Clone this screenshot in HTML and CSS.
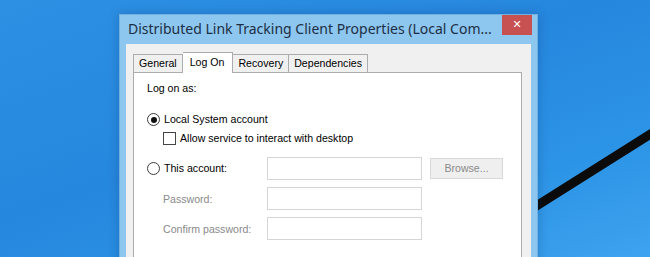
FILE: index.html
```html
<!DOCTYPE html>
<html lang="en">
<head>
  <meta charset="UTF-8" />
  <title>Distributed Link Tracking Client Properties</title>
  <link rel="stylesheet" href="styles.css">
</head>
<body>
  <div class="desktop">
    <svg class="wallpaper" width="650" height="257" viewBox="0 0 650 257">
      <line x1="300" y1="355" x2="660" y2="128" stroke="#0b0b0b" stroke-width="9" stroke-linecap="round" />
    </svg>

    <div class="window">
      <div class="titlebar">
        <span class="title">Distributed Link Tracking Client Properties (Local Com...</span>
        <button class="close">&#x2715;</button>
      </div>

      <div class="client">
        <div class="tabs">
          <div class="tab">General</div>
          <div class="tab active">Log On</div>
          <div class="tab">Recovery</div>
          <div class="tab">Dependencies</div>
        </div>

        <div class="page">
          <div class="caption">Log on as:</div>

          <label class="option">
            <span class="radio checked"></span>
            Local System account
          </label>
          <label class="option sub">
            <span class="checkbox"></span>
            Allow service to interact with desktop
          </label>

          <div class="account">
            <label class="option">
              <span class="radio"></span>
              This account:
            </label>
            <div class="field"></div>
            <div class="browse">Browse...</div>

            <div class="label">Password:</div>
            <div class="field"></div>
            <div></div>

            <div class="label">Confirm password:</div>
            <div class="field"></div>
            <div></div>
          </div>
        </div>
      </div>
    </div>
  </div>
</body>
</html>
```

FILE: styles.css
```css
* {
  box-sizing: border-box;
  margin: 0;
  padding: 0;
}
body {
  width: 650px;
  height: 257px;
  overflow: hidden;
  font-family: "Liberation Sans", Arial, sans-serif;
  font-size: 10.6px;
  color: #000;
}
.desktop {
  position: relative;
  width: 650px;
  height: 257px;
  background: linear-gradient(160deg, #2d90e3 0%, #2687de 45%, #2c94e6 75%, #3ea3ef 100%);
  overflow: hidden;
}
.wallpaper {
  position: absolute;
  left: 0;
  top: 0;
  filter: blur(0.6px);
}
.window {
  position: absolute;
  left: 119px;
  top: 14px;
  width: 419px;
  height: 260px;
  background: #8dc6ef;
  border: 1px solid #72b0e0;
  box-shadow: 0 0 10px rgba(0, 40, 90, 0.25);
  display: flex;
  flex-direction: column;
}
.titlebar {
  height: 29px;
  display: flex;
  align-items: flex-start;
  padding-left: 8px;
}
.title {
  font-family: "Noto Sans", "Open Sans", sans-serif;
  font-size: 14px;
  line-height: 20px;
  margin-top: 4px;
  color: #1c2f45;
  white-space: nowrap;
  flex: 1;
}
.close {
  flex-shrink: 0;
  width: 30px;
  height: 20px;
  margin-right: 5px;
  border: none;
  background: #c75050;
  color: #fff;
  font-size: 11px;
  font-weight: bold;
  line-height: 20px;
  font-family: "DejaVu Sans", sans-serif;
}
.client {
  flex: 1;
  margin: 0 6px 0 6px;
  background: #f0f0f0;
  padding: 8px 9px 0 7px;
  display: flex;
  flex-direction: column;
}
.tabs {
  display: flex;
  align-items: flex-end;
  height: 20px;
  position: relative;
  z-index: 1;
}
.tab {
  height: 18px;
  padding: 0 5px;
  border: 1px solid #acacac;
  border-bottom: none;
  border-left: none;
  background: #f0f0f0;
  line-height: 17px;
  color: #000;
}
.tab:first-child {
  border-left: 1px solid #acacac;
}
.tab.active {
  height: 21px;
  margin-bottom: -1px;
  background: #fff;
  padding: 0 8px 0 7px;
  line-height: 18px;
  border-left: none;
}
.page {
  flex: 1;
  background: #fff;
  border: 1px solid #acacac;
  border-bottom: none;
  padding: 9px 0 0 13px;
}
.caption {
  line-height: 13px;
}
.option {
  display: flex;
  align-items: center;
  gap: 4px;
  line-height: 13px;
  margin-top: 18px;
}
.option.sub {
  margin-top: 6px;
  margin-left: 16px;
}
.radio {
  width: 13px;
  height: 13px;
  border: 1px solid #3c3c3c;
  border-radius: 50%;
  background: #fff;
  display: flex;
  align-items: center;
  justify-content: center;
}
.radio.checked::after {
  content: "";
  width: 6px;
  height: 6px;
  border-radius: 50%;
  background: #111;
}
.checkbox {
  width: 13px;
  height: 13px;
  border: 1px solid #444;
  background: #fff;
}
.account {
  display: grid;
  grid-template-columns: 120px 155px 81px;
  grid-auto-rows: 23px;
  row-gap: 7px;
  align-items: center;
  margin-top: 12px;
}
.account .option {
  margin-top: 0;
}
.label {
  color: #8a8a8a;
  padding-left: 16px;
}
.field {
  height: 23px;
  border: 1px solid #d5d5d5;
  background: #fff;
}
.browse {
  margin-left: 8px;
  height: 21px;
  border: 1px solid #d9d9d9;
  background: #efefef;
  color: #8a8a8a;
  text-align: center;
  line-height: 19px;
}
```
